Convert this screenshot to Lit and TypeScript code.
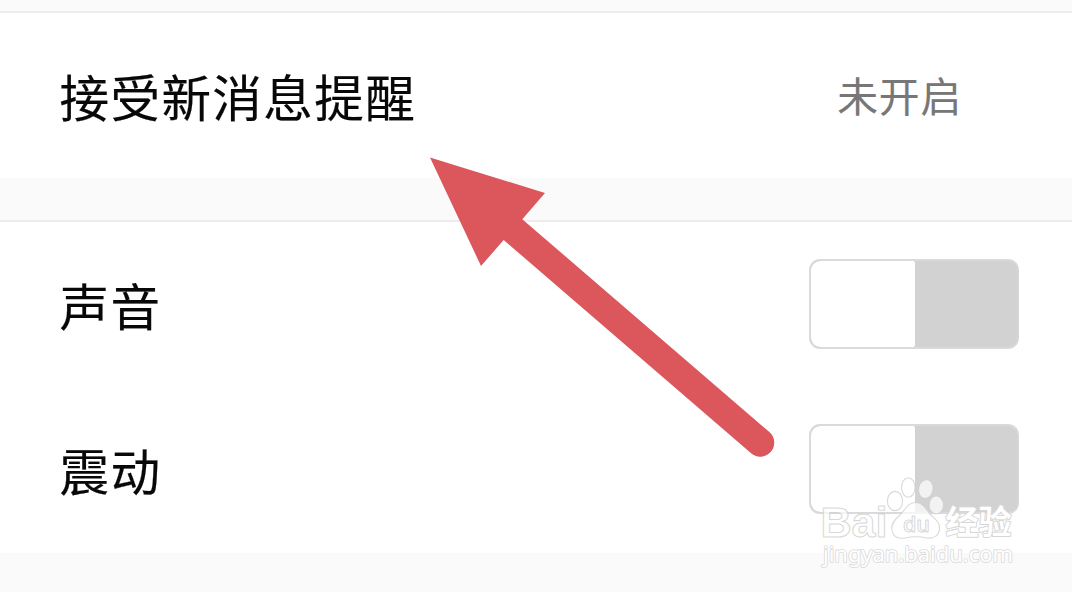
import { LitElement, html, css, svg } from "lit";
import { customElement, property } from "lit/decorators.js";

@customElement("toggle-switch")
class ToggleSwitch extends LitElement {
  static styles = css`
    :host { display: block; width: 210px; height: 90px; }
    .track {
      box-sizing: border-box; width: 100%; height: 100%;
      border: 2px solid #dadada; border-right-color: #d6d6d6; border-radius: 11px;
      background: #d2d2d2; overflow: hidden; display: flex;
    }
    .thumb { width: 104px; background: #fff; border-radius: 9px 2px 2px 9px; }
  `;
  render() {
    return html`<div class="track"><div class="thumb"></div></div>`;
  }
}

@customElement("setting-row")
class SettingRow extends LitElement {
  @property() label = "";
  static styles = css`
    :host {
      display: flex; align-items: center; justify-content: space-between;
      box-sizing: border-box; padding-left: 59.4px; padding-bottom: 2px; background: #fff;
    }
    .label {
      font-size: 49.6px; letter-spacing: 1.4px; line-height: 74px;
      color: #080808; -webkit-text-stroke: 0.2px #080808; white-space: nowrap;
    }
  `;
  render() {
    return html`<span class="label">${this.label}</span><slot></slot>`;
  }
}

@customElement("app-root")
class AppRoot extends LitElement {
  static styles = css`
    :host {
      display: block; position: relative; width: 1072px; height: 592px;
      overflow: hidden; background: #fafafa;
      font-family: "Noto Sans CJK SC", sans-serif;
    }
    .page { display: flex; flex-direction: column; }
    .band { box-sizing: border-box; background: #fafafa; border-bottom: 2px solid #ececec; }
    .top { height: 13px; }
    .gap { height: 44px; }
    .notice { height: 165px; padding-right: 110px; }
    .sound { height: 165px; padding-right: 53px; }
    .vibrate { height: 166px; padding-right: 53px; }
    .status {
      font-size: 40.8px; letter-spacing: 0.8px; line-height: 60px;
      color: #777; -webkit-text-stroke: 0.1px #777;
    }
    .overlay { position: absolute; inset: 0; }
    .mark { font-family: "Open Sans", "Noto Sans CJK SC", sans-serif; }
    .latin { font-family: "Liberation Sans", sans-serif; }
    .url { font-family: "Noto Sans", sans-serif; }
    .outline { paint-order: stroke; }
  `;

  watermark() {
    return svg`
      <g fill="#fff" fill-opacity=".7" stroke="#cccccc" stroke-opacity=".75"
         stroke-width="1.1" stroke-linejoin="round">
        <ellipse cx="895" cy="501" rx="7.6" ry="9.6" />
        <ellipse cx="908.3" cy="487.5" rx="6.8" ry="9.8" />
        <ellipse cx="925.8" cy="489" rx="7.2" ry="9.5" transform="rotate(12 925.8 489)" />
        <ellipse cx="936.3" cy="505" rx="7.2" ry="9" />
        <path d="M915.5 502.5C908 502.5 906 509 900 515C894 520 891 524 892 530C893 537 898 539 905 538C912 536.5 920 536.5 927 538C935 539 939 535 939.5 529C940 522 935 519 930 514C925 508 923 502.5 915.5 502.5Z" />
        <g class="mark">
          <text class="latin" x="820.5" y="536.5" font-weight="700" font-size="43" textLength="67" lengthAdjust="spacingAndGlyphs">Bai</text>
          <text x="903" y="532" font-weight="600" font-size="22" textLength="27" lengthAdjust="spacingAndGlyphs">du</text>
          <g class="outline" fill-opacity="1" stroke="#d6d6d6" stroke-opacity="1" stroke-width="2">
            <text x="945.5" y="534" font-weight="700" font-size="33" textLength="66" lengthAdjust="spacingAndGlyphs">经验</text>
          </g>
        </g>
        <g class="outline" fill-opacity="1" stroke="#dadada" stroke-opacity="1" stroke-width="1.7">
          <text class="url" x="823" y="562" font-size="21.5"
            textLength="190" lengthAdjust="spacingAndGlyphs">jingyan.baidu.com</text>
        </g>
      </g>`;
  }

  render() {
    return html`
      <div class="page">
        <div class="band top"></div>
        <setting-row class="notice" label="接受新消息提醒">
          <span class="status">未开启</span>
        </setting-row>
        <div class="band gap"></div>
        <setting-row class="sound" label="声音"><toggle-switch></toggle-switch></setting-row>
        <setting-row class="vibrate" label="震动"><toggle-switch></toggle-switch></setting-row>
      </div>
      <svg class="overlay" width="1072" height="592" viewBox="0 0 1072 592">
        <path fill="#db575c" d="M430 157.5L545 193L522.3 219.2L769.4 432.1A14 14 0 0 1 751.1 453.3L503.7 240L481 266Z" />
        ${this.watermark()}
      </svg>`;
  }
}
